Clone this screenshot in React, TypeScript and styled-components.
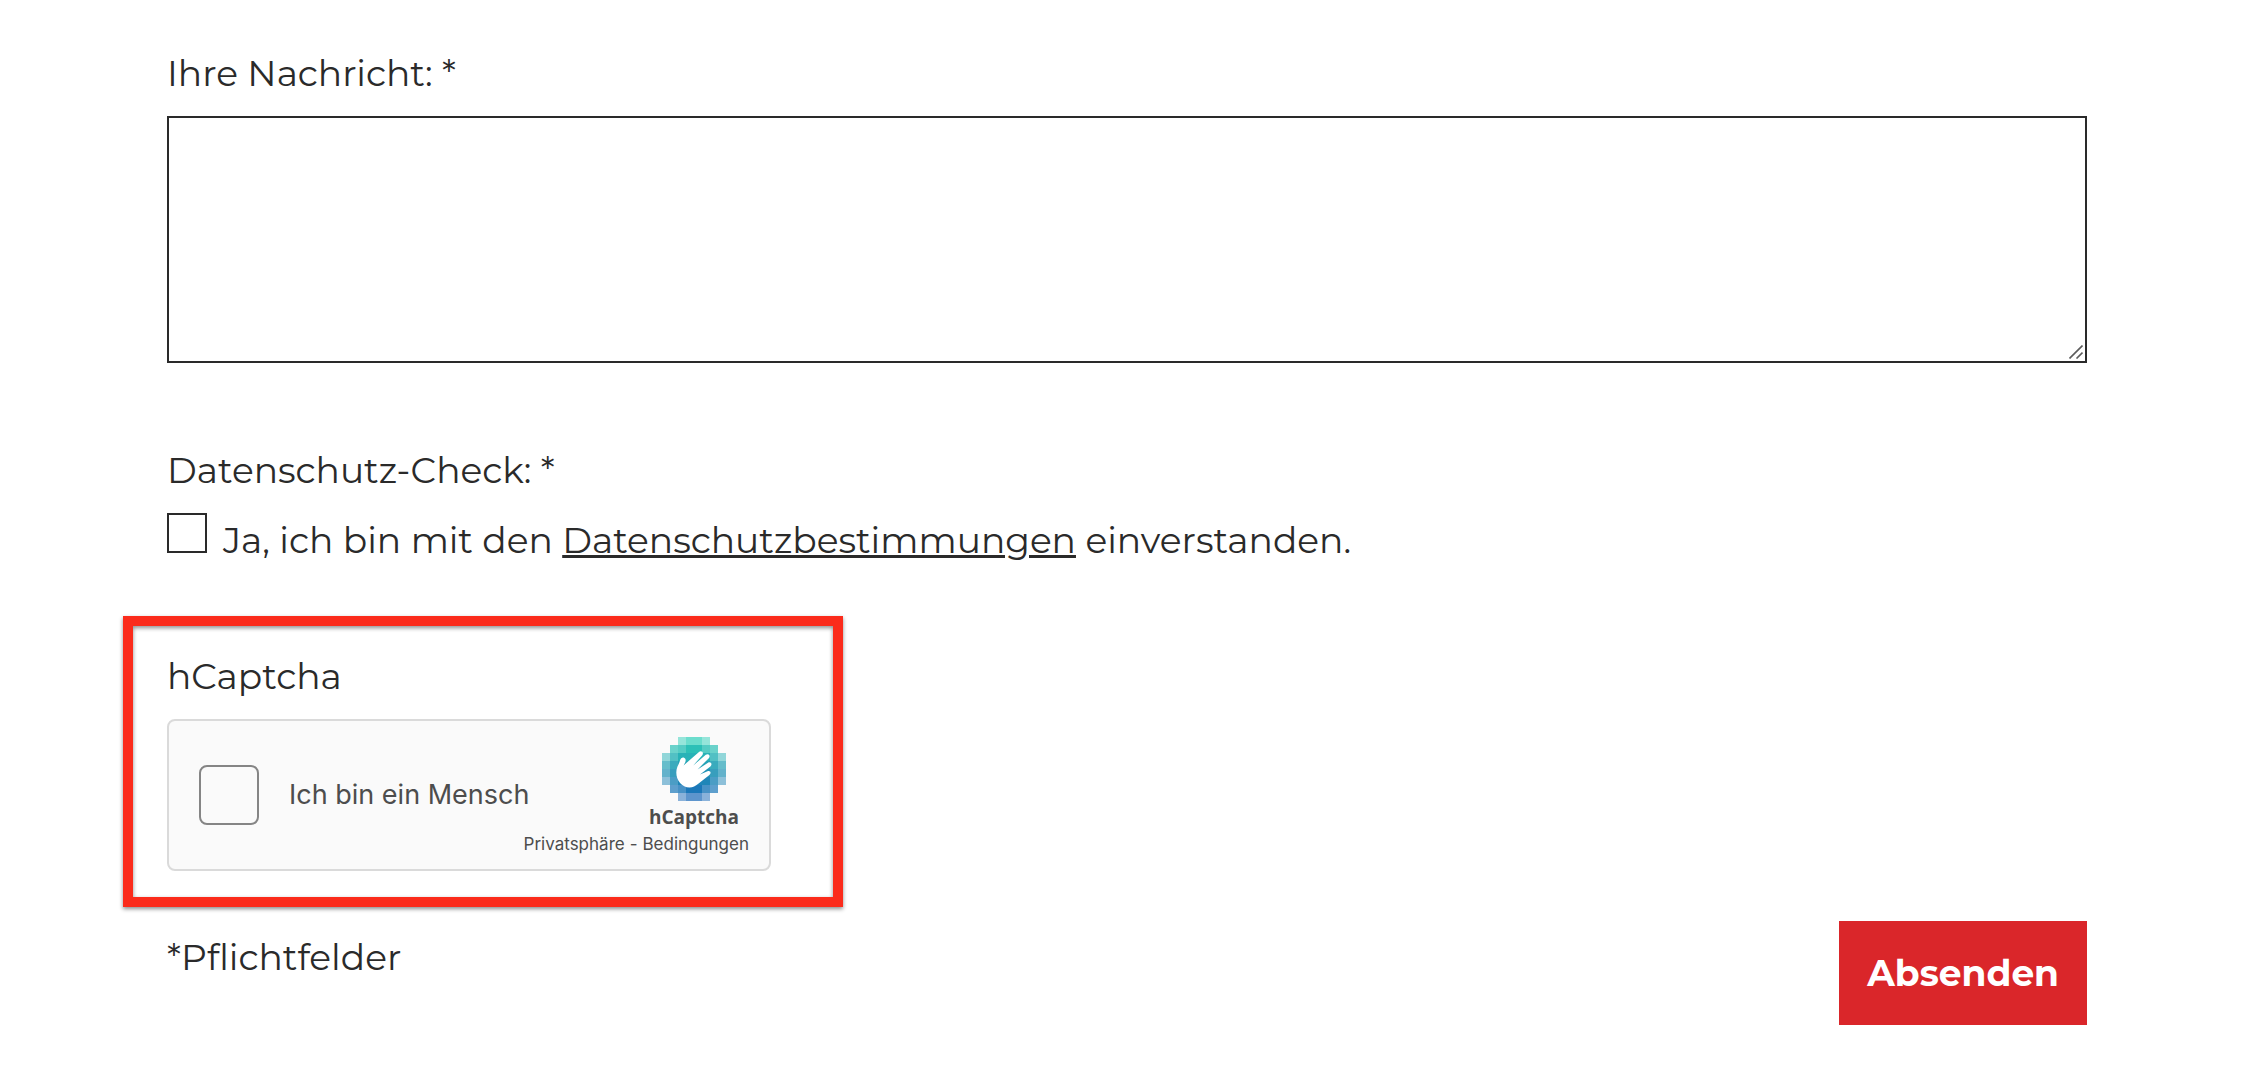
import React from "react";
import styled, { createGlobalStyle } from "styled-components";

const ink = "#2a2a2a";

const GlobalStyle = createGlobalStyle`
  *, *::before, *::after { box-sizing: border-box; }
  body {
    margin: 0;
    background: #fff;
    color: ${ink};
    font-family: Montserrat, Inter, "Liberation Sans", sans-serif;
    font-size: 36px;
    font-weight: 400;
    line-height: 54px;
  }
`;

const Form = styled.form`
  padding: 46px 167px 40px;
`;

const Field = styled.div<{ $after: number }>`
  display: flex;
  flex-direction: column;
  align-items: stretch;
  gap: 16px;
  margin-bottom: ${(p) => p.$after}px;
`;

const Label = styled.label`
  align-self: flex-start;
`;

const Title = styled.div``;

const MessageBox = styled.div`
  position: relative;
  display: flex;
`;

const Message = styled.textarea`
  width: 100%;
  height: 247px;
  padding: 16px;
  border: 2px solid ${ink};
  border-radius: 0;
  background: #fff;
  color: inherit;
  font: inherit;
  resize: vertical;

  &::-webkit-resizer {
    display: none;
  }
`;

const Grip = styled.svg`
  position: absolute;
  right: 4px;
  bottom: 4px;
  pointer-events: none;
`;

const Consent = styled.div`
  display: flex;
  align-items: flex-start;
  gap: 16px;
`;

const Tick = styled.input<{ $size: number; $radius: number; $line: string }>`
  appearance: none;
  flex: none;
  width: ${(p) => p.$size}px;
  height: ${(p) => p.$size}px;
  margin: 0;
  border: 2px solid ${(p) => p.$line};
  border-radius: ${(p) => p.$radius}px;
  background: transparent;

  &:checked {
    background: ${(p) => p.$line};
  }
`;

const PolicyLink = styled.a`
  color: inherit;
  text-decoration: underline;
  text-decoration-thickness: 3px;
  text-underline-offset: 2px;
`;

const Highlight = styled.section`
  width: 720px;
  max-width: calc(100% + 44px);
  margin: 0 0 14px -44px;
  padding: 23px 52px 26px 34px;
  border: 10px solid #fb2b1b;
  box-shadow: 0 2px 4px rgba(0, 0, 0, 0.45), inset 0 2px 4px rgba(0, 0, 0, 0.45);
`;

const Captcha = styled.div`
  display: flex;
  justify-content: space-between;
  width: 604px;
  height: 152px;
  padding: 0 20px 0 30px;
  border: 2px solid #dadada;
  border-radius: 8px;
  background: #fafafa;
  color: #4d4d4d;
  font-family: Inter, "Liberation Sans", sans-serif;
`;

const Human = styled.div`
  display: flex;
  align-items: center;
  gap: 30px;
  min-width: 0;
  font-size: 27px;
  line-height: 36px;
  white-space: nowrap;
`;

const Brand = styled.div`
  display: flex;
  flex: none;
  flex-direction: column;
  align-items: flex-end;
  padding-top: 16px;
`;

const BrandMark = styled.div`
  display: flex;
  flex-direction: column;
  align-items: center;
  margin-right: 10px;
`;

const BrandName = styled.span`
  font-family: "Open Sans", "Noto Sans", sans-serif;
  font-size: 19px;
  font-weight: 700;
  line-height: 32px;
`;

const Legal = styled.nav`
  display: flex;
  gap: 5px;
  font-size: 17px;
  line-height: 22px;

  a {
    color: inherit;
    text-decoration: none;
  }
`;

const Footer = styled.footer`
  display: flex;
  justify-content: space-between;
  align-items: flex-start;
`;

const Note = styled.p`
  margin: 9px 0 0;
`;

const Submit = styled.button`
  padding: 25px 28px;
  border: 0;
  background: #da262a;
  color: #fff;
  font: inherit;
  font-weight: 700;
  cursor: pointer;
`;

const rows: { fill: string; first: number; alpha: number[] }[] = [
  { fill: "#2fd0b9", first: 2, alpha: [0.5, 0.7, 0.7, 0.5] },
  { fill: "#2cc0b7", first: 1, alpha: [0.7, 0.8, 1, 1, 0.8, 0.7] },
  { fill: "#28b2b7", first: 0, alpha: [0.5, 0.8, 1, 1, 1, 1, 0.8, 0.5] },
  { fill: "#25a2b6", first: 0, alpha: [0.7, 0.9, 1, 1, 1, 1, 0.9, 0.7] },
  { fill: "#2293b6", first: 0, alpha: [0.7, 0.9, 1, 1, 1, 1, 0.9, 0.7] },
  { fill: "#1f86b8", first: 0, alpha: [0.5, 0.8, 1, 1, 1, 1, 0.8, 0.5] },
  { fill: "#1b78b9", first: 1, alpha: [0.7, 0.8, 1, 1, 0.8, 0.7] },
  { fill: "#1a69b9", first: 2, alpha: [0.5, 0.7, 0.7, 0.5] },
];

function HandLogo() {
  return (
    <svg width="64" height="64" viewBox="0 0 64 64" aria-hidden="true">
      <g shapeRendering="crispEdges">
        {rows.map((row, y) =>
          row.alpha.map((a, i) => (
            <rect
              key={`${y}-${i}`}
              x={(row.first + i) * 8}
              y={y * 8}
              width="8"
              height="8"
              fill={row.fill}
              fillOpacity={a}
            />
          )),
        )}
      </g>
      <path
        fill="#fff"
        d="M14.3 35.5C14.3 30.5 16.7 27.7 17.9 23.8C18.7 21 20.4 20.1 22 20.7C23.8 21.4 24 23 23.3 25.2L21.6 28.4L36.7 15.2C39 12.8 42.3 15.3 40.3 18.2L31.3 28.4L43.8 17.8C46.4 15.8 49 18.8 46.8 21.2L35.6 32.4L46 25.7C48.7 24.2 50.9 27.2 48.4 29.4L38 37.4L45.5 34.3C48.3 33.2 49.8 36.1 47.4 38L36.6 46.6C33.2 49.3 31 50.5 27.5 50.5C20 50.5 14.3 43.5 14.3 35.5Z"
      />
    </svg>
  );
}

export default function App() {
  return (
    <>
      <GlobalStyle />
      <Form onSubmit={(e: React.FormEvent) => e.preventDefault()}>
        <Field $after={80}>
          <Label htmlFor="message">Ihre Nachricht: *</Label>
          <MessageBox>
            <Message id="message" required />
            <Grip width="14" height="14" viewBox="0 0 14 14" aria-hidden="true">
              <path d="M0.5 13.5L13.5 0.5M7.5 13.5L13.5 7.5" stroke="#5c5c5c" strokeWidth="1.6" />
            </Grip>
          </MessageBox>
        </Field>

        <Field $after={49}>
          <Title id="privacy-title">Datenschutz-Check: *</Title>
          <Consent>
            <Tick
              type="checkbox"
              id="privacy"
              aria-describedby="privacy-title"
              required
              $size={40}
              $radius={0}
              $line={ink}
            />
            <Label htmlFor="privacy">
              Ja, ich bin mit den <PolicyLink href="#datenschutz">Datenschutzbestimmungen</PolicyLink>{" "}
              einverstanden.
            </Label>
          </Consent>
        </Field>

        <Highlight>
          <Field $after={0}>
            <Title>hCaptcha</Title>
            <Captcha>
              <Human>
                <Tick type="checkbox" id="human" $size={60} $radius={8} $line="#858585" />
                <label htmlFor="human">Ich bin ein Mensch</label>
              </Human>
              <Brand>
                <BrandMark>
                  <HandLogo />
                  <BrandName>hCaptcha</BrandName>
                </BrandMark>
                <Legal>
                  <a href="#privatsphaere">Privatsphäre</a>
                  <span>-</span>
                  <a href="#bedingungen">Bedingungen</a>
                </Legal>
              </Brand>
            </Captcha>
          </Field>
        </Highlight>

        <Footer>
          <Note>*Pflichtfelder</Note>
          <Submit type="submit">Absenden</Submit>
        </Footer>
      </Form>
    </>
  );
}
